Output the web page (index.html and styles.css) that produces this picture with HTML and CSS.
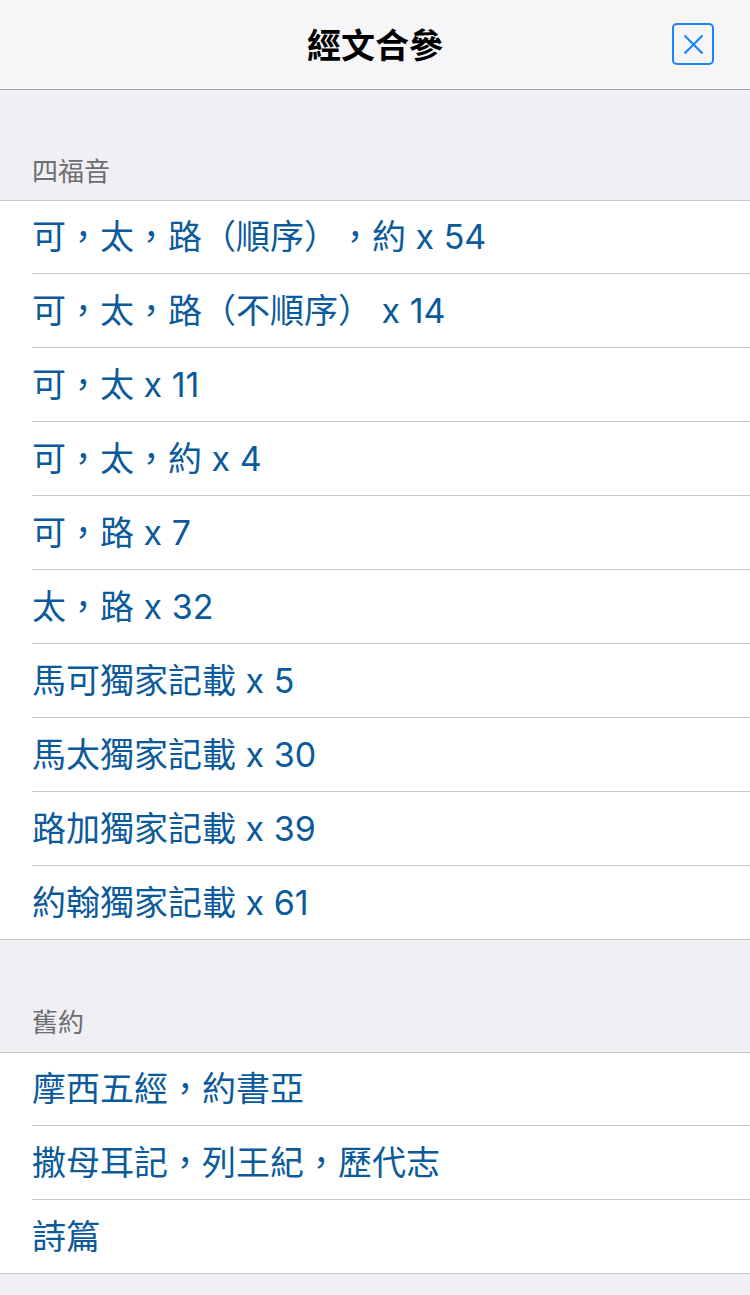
FILE: index.html
```html
<!DOCTYPE html>
<html lang="zh-Hant">
<head>
<meta charset="utf-8">
<title>經文合參</title>
<link rel="stylesheet" href="styles.css">
</head>
<body>
<header class="navbar">
  <h1 class="nav-title">經文合參</h1>
  <button class="close-btn" aria-label="關閉">
    <svg width="38" height="38" viewBox="0 0 38 38"><path d="M10.5 10.5 L28.5 28.5 M28.5 10.5 L10.5 28.5" stroke="#1a84ff" stroke-width="2.2" fill="none" stroke-linecap="butt"/></svg>
  </button>
</header>
<main>
  <section class="group">
    <div class="group-header">四福音</div>
    <ul class="list">
      <li class="row">可，太，路（順序），約 x 54</li>
      <li class="row">可，太，路（不順序） x 14</li>
      <li class="row">可，太 x 11</li>
      <li class="row">可，太，約 x 4</li>
      <li class="row">可，路 x 7</li>
      <li class="row">太，路 x 32</li>
      <li class="row">馬可獨家記載 x 5</li>
      <li class="row">馬太獨家記載 x 30</li>
      <li class="row">路加獨家記載 x 39</li>
      <li class="row">約翰獨家記載 x 61</li>
    </ul>
  </section>
  <section class="group">
    <div class="group-header group-header-2">舊約</div>
    <ul class="list">
      <li class="row">摩西五經，約書亞</li>
      <li class="row">撒母耳記，列王紀，歷代志</li>
      <li class="row">詩篇</li>
    </ul>
  </section>
</main>
</body>
</html>
```

FILE: styles.css
```css
html, body {
  margin: 0;
  padding: 0;
}
body {
  background: #efeff4;
  font-family: Inter, "Noto Sans CJK TC", "Noto Sans", sans-serif;
  width: 750px;
  min-height: 1295px;
  text-spacing-trim: space-all;
}
.navbar {
  position: relative;
  height: 89px;
  background: #f6f6f8;
  border-bottom: 1px solid #a9a9ac;
  display: flex;
  align-items: center;
  justify-content: center;
}
.nav-title {
  margin: 0;
  padding-top: 2px;
  font-size: 34px;
  font-weight: 700;
  color: #000;
  line-height: 1;
}
.close-btn {
  position: absolute;
  left: 672px;
  top: 23px;
  width: 42px;
  height: 42px;
  padding: 0;
  margin: 0;
  border: 2px solid #1a84ff;
  border-radius: 5px;
  background: transparent;
  display: flex;
  align-items: center;
  justify-content: center;
}
.close-btn svg {
  display: block;
}
.group-header {
  height: 110px;
  box-sizing: border-box;
  display: flex;
  align-items: flex-end;
  padding: 0 0 12px 32px;
  font-size: 26px;
  line-height: 32px;
  color: #6d6d72;
}
.group-header-2 {
  height: 112px;
  padding-bottom: 13px;
}
.list {
  list-style: none;
  margin: 0;
  padding: 0 0 0 32px;
  background: #fff;
  border-top: 1px solid #c8c7cc;
  border-bottom: 1px solid #c8c7cc;
}
.row {
  height: 74px;
  box-sizing: border-box;
  padding-bottom: 4px;
  display: flex;
  align-items: center;
  font-size: 34px;
  color: #0b5a9b;
  border-bottom: 1px solid #c8c7cc;
  white-space: pre;
}
.row:first-child {
  height: 73px;
  padding-bottom: 5px;
}
.row:last-child {
  border-bottom: none;
  height: 73px;
}
```
